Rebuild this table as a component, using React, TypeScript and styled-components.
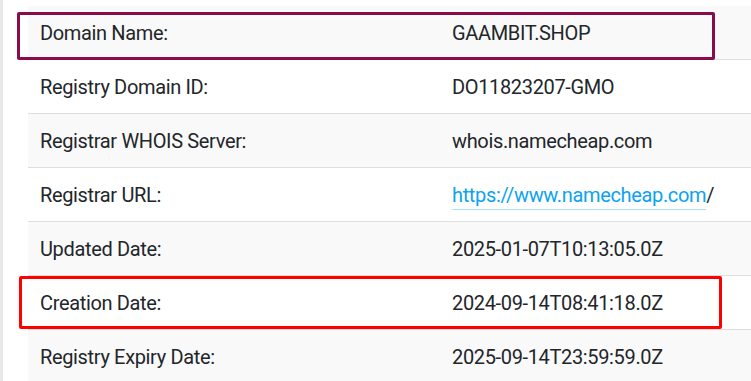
import styled, { createGlobalStyle } from 'styled-components';

const rows: { label: string; value: string; link?: boolean; mark?: 'maroon' | 'red' }[] = [
  { label: 'Domain Name:', value: 'GAAMBIT.SHOP', mark: 'maroon' },
  { label: 'Registry Domain ID:', value: 'DO11823207-GMO' },
  { label: 'Registrar WHOIS Server:', value: 'whois.namecheap.com' },
  { label: 'Registrar URL:', value: 'https://www.namecheap.com', link: true },
  { label: 'Updated Date:', value: '2025-01-07T10:13:05.0Z' },
  { label: 'Creation Date:', value: '2024-09-14T08:41:18.0Z', mark: 'red' },
  { label: 'Registry Expiry Date:', value: '2025-09-14T23:59:59.0Z' },
];

const GlobalStyle = createGlobalStyle`
  html, body {
    margin: 0;
    padding: 0;
    background: #ffffff;
    overflow: hidden;
  }
  body {
    font-family: Roboto, 'Liberation Sans', sans-serif;
  }
`;

const App = () => {
  return (
    <Whois.Page>
      <GlobalStyle />
      <Whois.Table>
        {rows.map((row, i) => (
          <Whois.Row key={row.label} $odd={i % 2 === 0}>
            <Whois.Label>{row.label}</Whois.Label>
            <Whois.Value>
              {row.link ? (
                <>
                  <Whois.Link href='#'>{row.value}</Whois.Link>/
                </>
              ) : (
                row.value
              )}
            </Whois.Value>
            {row.mark && <Whois.Mark $tone={row.mark} />}
          </Whois.Row>
        ))}
      </Whois.Table>
    </Whois.Page>
  );
};

const Whois = {
  Page: styled.div`
    width: 751px;
    height: 381px;
    box-sizing: border-box;
    border-left: 3px solid #e8e8e8;
    padding: 6px 0 0 25px;
    overflow: hidden;
  `,
  Table: styled.div`
    display: flex;
    flex-direction: column;
    width: 740px;
  `,
  Row: styled.div<{ $odd: boolean }>`
    position: relative;
    display: grid;
    grid-template-columns: 412px 1fr;
    align-items: center;
    height: 54px;
    box-sizing: border-box;
    padding: 1px 12px 0;
    border-bottom: 1px solid #dedede;
    background: ${({ $odd }) => ($odd ? '#f9f9f9' : '#ffffff')};
    color: #22262a;
    font-size: 20px;
    letter-spacing: -0.35px;
    white-space: nowrap;
  `,
  Label: styled.span``,
  Value: styled.span``,
  Link: styled.a`
    color: #0ba3f0;
    text-decoration: none;
    border-bottom: 1px solid #a8e0fb;
    padding-bottom: 2px;
  `,
  Mark: styled.div<{ $tone: 'maroon' | 'red' }>`
    position: absolute;
    border-radius: 2px;
    border: 3px solid ${({ $tone }) => ($tone === 'maroon' ? '#880c4b' : '#ff0000')};
    ${({ $tone }) =>
      $tone === 'maroon'
        ? 'left: -11px; top: 6px; width: 692px; height: 42px;'
        : 'left: -9px; top: 0px; width: 697px; height: 47px;'}
  `,
};

export default App;
